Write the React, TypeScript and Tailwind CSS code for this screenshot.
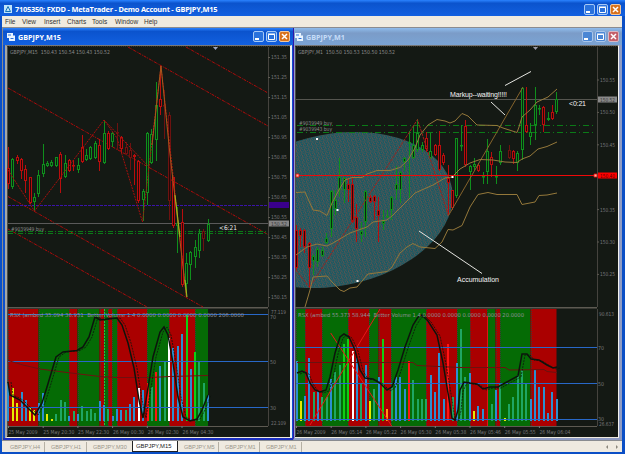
import React from 'react';
import clsx from 'clsx';

// x, high, body top, body bottom, low, colour (g = up, r = down, d = dim)
type Candle = [number, number, number, number, number, string];
// x, top, colour
type Bar = [number, number, string];
// start x, end x, colour
type Band = [number, number, string];

const CANDLE_COLORS: Record<string, string> = { g: '#0f8f1c', r: '#b90d0d', d: '#6d1210' };

const BAR_COLORS: Record<string, string> = {
  c: '#2b8fd0',
  g: '#1fa663',
  l: '#0fcf12',
  y: '#e6ea00',
  w: '#ffffff',
  r: '#ff1414',
  o: '#ff9a10',
};

const M15_CANDLES: Candle[] = [
  [8.5, 147, 168, 184, 189, 'r'], [12.5, 158, 159, 187, 189, 'g'], [17.5, 155, 157, 161, 164, 'r'],
  [21.5, 158, 159, 171, 179, 'r'], [25.5, 165, 169, 181, 193, 'r'], [30.5, 177, 177, 203, 204, 'r'],
  [34.5, 193, 197, 202, 211, 'g'], [38.5, 170, 175, 194, 197, 'g'], [43.5, 144, 164, 174, 177, 'g'],
  [47.5, 161, 163, 166, 167, 'g'], [51.5, 160, 162, 166, 167, 'g'], [56.5, 157, 157, 166, 167, 'g'],
  [60.5, 152, 154, 179, 193, 'r'], [65.5, 155, 163, 177, 178, 'g'], [69.5, 159, 160, 171, 172, 'r'],
  [73.5, 160, 165, 166, 171, 'r'], [78.5, 158, 165, 170, 173, 'g'], [82.5, 135, 147, 162, 163, 'r'],
  [86.5, 149, 155, 160, 161, 'g'], [90.5, 146, 147, 159, 160, 'g'], [95.5, 141, 143, 158, 159, 'g'],
  [99.5, 139, 145, 162, 171, 'r'], [104.5, 120, 133, 163, 164, 'g'], [108.5, 131, 133, 149, 150, 'r'],
  [112.5, 132, 133, 142, 147, 'g'], [117.5, 123, 132, 133, 150, 'd'], [121.5, 136, 137, 149, 153, 'r'],
  [126.5, 142, 147, 154, 155, 'd'], [130.5, 143, 150, 158, 170, 'd'], [134.5, 154, 155, 157, 185, 'r'],
  [138.5, 160, 161, 201, 203, 'r'], [143.5, 189, 191, 200, 221, 'g'], [147.5, 132, 133, 193, 205, 'g'],
  [151.5, 129, 134, 163, 164, 'g'], [156.5, 82, 105, 140, 161, 'g'], [160.5, 66, 99, 107, 115, 'r'],
  [164.5, 90, 105, 106, 139, 'd'], [169.5, 112, 115, 201, 220, 'd'], [173.5, 177, 177, 226, 228, 'r'],
  [177.5, 207, 223, 226, 253, 'g'], [182.5, 209, 222, 285, 287, 'r'], [186.5, 253, 263, 284, 296, 'g'],
  [190.5, 251, 252, 265, 280, 'g'], [195.5, 240, 247, 257, 268, 'g'], [199.5, 229, 233, 251, 258, 'g'],
  [203.5, 229, 231, 239, 251, 'd'], [208.5, 219, 224, 241, 242, 'g'],
];

const M1_CANDLES: Candle[] = [
  [296.5, 225, 230, 268, 270, 'r'], [300.5, 228, 230, 236, 247, 'r'], [304.5, 229, 230, 247, 253, 'r'],
  [309.5, 242, 243, 268, 288, 'r'], [313.5, 254, 256, 261, 275, 'g'], [317.5, 247, 249, 262, 267, 'g'],
  [322.5, 247, 250, 256, 257, 'g'], [326.5, 233, 238, 243, 244, 'g'], [331.5, 190, 191, 229, 237, 'g'],
  [335.5, 190, 200, 209, 215, 'g'], [339.5, 158, 177, 190, 197, 'g'], [344.5, 177, 178, 190, 203, 'g'],
  [348.5, 178, 184, 190, 202, 'r'], [352.5, 178, 184, 222, 223, 'r'], [356.5, 204, 217, 229, 242, 'r'],
  [361.5, 222, 231, 235, 242, 'g'], [365.5, 190, 191, 222, 237, 'g'], [370.5, 195, 197, 202, 203, 'r'],
  [374.5, 195, 196, 202, 220, 'r'], [378.5, 197, 210, 216, 242, 'r'], [383.5, 210, 221, 224, 230, 'g'],
  [387.5, 210, 216, 217, 218, 'g'], [391.5, 196, 197, 210, 220, 'g'], [396.5, 166, 184, 190, 200, 'g'],
  [400.5, 171, 172, 190, 203, 'g'], [404.5, 157, 158, 162, 171, 'g'], [409.5, 131, 142, 143, 198, 'g'],
  [413.5, 125, 145, 158, 159, 'g'], [417.5, 119, 133, 150, 152, 'g'], [422.5, 142, 145, 150, 152, 'g'],
  [426.5, 132, 138, 149, 152, 'r'], [430.5, 133, 151, 158, 159, 'g'], [435.5, 144, 145, 155, 156, 'r'],
  [439.5, 131, 145, 170, 171, 'r'], [443.5, 153, 155, 163, 165, 'r'], [448.5, 165, 178, 183, 215, 'r'],
  [452.5, 190, 190, 208, 210, 'r'], [456.5, 138, 138, 196, 198, 'g'], [461.5, 125, 145, 146, 151, 'g'],
  [465.5, 120, 126, 165, 167, 'r'], [470.5, 165, 166, 172, 190, 'g'], [474.5, 158, 164, 167, 171, 'g'],
  [478.5, 163, 165, 171, 172, 'r'], [483.5, 172, 176, 177, 184, 'g'], [487.5, 139, 151, 172, 184, 'g'],
  [491.5, 152, 157, 165, 177, 'r'], [496.5, 166, 176, 177, 184, 'g'], [500.5, 145, 151, 163, 165, 'g'],
  [509.5, 145, 150, 158, 159, 'd'], [513.5, 150, 151, 159, 164, 'r'], [517.5, 151, 153, 163, 171, 'g'],
  [522.5, 87, 88, 150, 160, 'g'], [526.5, 87, 125, 132, 133, 'r'], [530.5, 123, 132, 137, 145, 'g'],
  [535.5, 87, 105, 125, 140, 'g'], [539.5, 105, 108, 109, 115, 'g'], [543.5, 106, 107, 125, 132, 'r'],
  [548.5, 112, 118, 120, 121, 'g'], [552.5, 105, 112, 119, 120, 'r'], [556.5, 92, 99, 112, 114, 'g'],
];

const M15_BARS: Bar[] = [
  [8.3, 383, 'c'], [12.7, 388, 'y'], [17, 403, 'y'], [21.5, 392, 'c'], [26, 400, 'c'], [30, 407, 'y'],
  [34.3, 410, 'y'], [38.7, 403, 'c'], [43, 393, 'c'], [47.3, 414, 'y'], [51.7, 419, 'y'], [56, 414, 'g'],
  [60.7, 400, 'g'], [65, 402, 'g'], [69, 416, 'c'], [73.7, 411, 'g'], [78, 414, 'c'], [82, 406, 'g'],
  [86.7, 411, 'g'], [90.7, 409, 'g'], [95, 413, 'g'], [99.7, 401, 'c'], [104, 405, 'c'], [108, 409, 'g'],
  [112.7, 416, 'c'], [117, 409, 'c'], [121.3, 410, 'c'], [125.7, 410, 'g'], [130, 404, 'c'], [134.3, 397, 'c'],
  [138.7, 388, 'w'], [143, 390, 'c'], [147.7, 383, 'r'], [152, 387, 'g'], [156, 372, 'r'], [160.3, 366, 'c'],
  [165, 361, 'g'], [169, 338, 'w'], [173.3, 348, 'c'], [177.7, 346, 'c'], [182, 334, 'c'], [186.5, 314, 'l'],
  [190.7, 369, 'c'], [195, 352, 'l'], [199.3, 361, 'g'], [204, 383, 'g'], [208, 395, 'c'],
];

const M1_BARS: Bar[] = [
  [297, 361, 'c'], [300.7, 401, 'y'], [305, 396, 'c'], [309, 358, 'c'], [313.7, 392, 'g'], [318, 391, 'c'],
  [322.3, 397, 'g'], [326.7, 397, 'g'], [331, 379, 'c'], [335.3, 372, 'g'], [339.7, 365, 'g'], [344, 344, 'l'],
  [348, 339, 'l'], [352.7, 351, 'w'], [357, 358, 'c'], [361.3, 384, 'g'], [365.7, 365, 'c'], [370, 401, 'y'],
  [374.3, 389, 'g'], [378.7, 377, 'c'], [383, 339, 'l'], [387.3, 409, 'o'], [391.7, 387, 'g'], [396, 377, 'c'],
  [400.3, 377, 'c'], [405, 389, 'c'], [409, 361, 'r'], [413.3, 380, 'g'], [418, 399, 'g'], [422.3, 399, 'g'],
  [426.3, 399, 'g'], [430.7, 375, 'c'], [435, 392, 'c'], [439.3, 353, 'c'], [443.7, 399, 'c'], [448.3, 344, 'r'],
  [452.7, 397, 'g'], [456.7, 363, 'c'], [461, 329, 'g'], [465.3, 377, 'g'], [469.7, 373, 'c'], [474, 411, 'y'],
  [478.3, 406, 'c'], [482.7, 409, 'c'], [491.7, 404, 'g'], [496, 390, 'c'], [500.3, 384, 'g'], [504.7, 418, 'y'],
  [509, 404, 'g'], [513.3, 397, 'g'], [517.7, 375, 'g'], [522, 370, 'g'], [526.3, 384, 'g'], [530.7, 399, 'c'],
  [535, 370, 'c'], [539.3, 387, 'c'], [543.7, 387, 'c'], [548, 413, 'c'], [552.3, 392, 'c'], [556.5, 399, 'c'],
];

const M15_BANDS: Band[] = [
  [8, 38.5, 'r'], [38.5, 69, 'g'], [69, 77.5, 'r'], [77.5, 99.5, 'g'], [99.5, 104, 'r'], [104, 108, 'g'],
  [108, 112, 'r'], [112, 117, 'g'], [117, 147, 'r'], [147, 169, 'g'], [169, 195, 'r'], [195, 208, 'g'],
];

const M1_BANDS: Band[] = [
  [296, 305, 'g'], [305, 322, 'r'], [322, 348, 'g'], [348, 369, 'r'], [369, 378.5, 'g'], [378.5, 391, 'r'],
  [391, 426, 'g'], [426, 457, 'r'], [457, 470, 'g'], [470, 487, 'r'], [487, 495.5, 'g'], [495.5, 500, 'r'],
  [500, 530.5, 'g'], [530.5, 556.5, 'r'],
];

function Candles({ data }: { data: Candle[] }) {
  return (
    <g>
      {data.map(([x, high, top, bottom, low, c]) => (
        <g key={x} stroke={CANDLE_COLORS[c]} fill={c === 'g' ? '#0a2410' : '#2a0606'}>
          <path d={`M${x} ${high}V${low}`} />
          <rect x={x - 1} y={top + 0.5} width={2} height={Math.max(bottom - top - 1, 0.5)} />
        </g>
      ))}
    </g>
  );
}

function Bands({ data }: { data: Band[] }) {
  return (
    <g>
      {data.map(([from, to, c]) => (
        <rect key={from} x={from} y={309} width={to - from} height={117} fill={c === 'r' ? '#aa0000' : '#056b05'} />
      ))}
      {data.map(([from]) => (
        <path key={from} d={`M${Math.round(from) + 0.5} 309V426`} stroke="#3d3a33" strokeDasharray="1 1" />
      ))}
    </g>
  );
}

function Bars({ data }: { data: Bar[] }) {
  return (
    <g>
      {data.map(([x, top, c]) => (
        <rect key={x} x={Math.round(x - 1)} y={top} width={2} height={421 - top} fill={BAR_COLORS[c]} />
      ))}
    </g>
  );
}

interface LabelProps {
  x: number;
  y: number;
  w?: number;
  fill?: string;
  size?: number;
  children: React.ReactNode;
}

function Label({ x, y, w, fill = '#77777a', size = 5.5, children }: LabelProps) {
  return (
    <text
      x={x}
      y={y}
      fill={fill}
      fontSize={size}
      textLength={w}
      lengthAdjust="spacingAndGlyphs"
      fontFamily='"DejaVu Sans", sans-serif'
    >
      {children}
    </text>
  );
}

interface FrameProps {
  left: number;
  axis: number;
  right: number;
}

// Pane borders and the scale line
function Frame({ left, axis, right }: FrameProps) {
  return (
    <g stroke="#5d5a52" fill="none">
      <path d={`M${left + 0.5} 46V436`} stroke="#4b4a45" />
      <path d={`M${left} 46.5H${right}`} stroke="#3a3426" strokeDasharray="1 1" />
      <path d={`M${axis + 0.5} 47V307M${axis + 0.5} 309V426`} stroke="#45433e" />
      <path d={`M${left} 307.8H${axis}`} strokeWidth="1.6" />
      <path d={`M${left} 426.5H${axis}`} />
    </g>
  );
}

function ChartM15() {
  const prices = ['151.35', '151.25', '151.15', '151.05', '150.95', '150.85', '150.75', '150.65', '150.55', '150.45', '150.35', '150.25', '150.15'];
  const dates = ['25 May 2009', '25 May 20:30', '25 May 22:30', '26 May 00:30', '26 May 02:30', '26 May 04:30'];
  const rsx =
    'M8 382L10 395L20 400L30 410L35 415L42 403L47 387L56 357L63 352L77 350.500L83 347L89 337L95 317L100 320L107 319L117 318L122 325L128 343L134 368L139 400L143 418L147 394L153 357L160 332L164 327L168 335L173 363L178 397L183 417L190 421L197 419L202 410L208 395';
  return (
    <svg width={283} height={391} viewBox="7 46 283 391" className="block">
      <path d="M7 46h283v391H7z" fill="#141914" />
      <Frame left={7} axis={268} right={290} />

      {/* Regression channel */}
      <path
        d="M8 88L268 234.500M128 47L268 126M186 47L268 93M8 196.500L203 307M8 229L147 307"
        stroke="#b00a0a"
        strokeDasharray="3 1 1 1"
      />

      <path d="M8 205.500H268" stroke="#3a14a8" strokeDasharray="3 1" />
      <path d="M8 223.500H268" stroke="#5a5a5a" />
      <path d="M8 231.500H268M8 233.500H268" stroke="#0b7a17" strokeDasharray="5 2 1 2" />

      <Candles data={M15_CANDLES} />

      <path d="M8 170L34.500 211L104 120L117 138L142.500 222L161 66L186.500 297" fill="none" stroke="#a80f0c" strokeDasharray="2 1" />
      <path d="M104 120L150 168" stroke="#a80f0c" strokeDasharray="2 1" />
      <path d="M152 145L161 66L169.500 150L186.500 297" fill="none" stroke="#a8581c" />
      <path d="M175 195L180 237M185 280L187 297" fill="none" stroke="#9bbf1e" />
      <path d="M213 47h5l-2.500 3z" fill="#9aa4c0" />

      <Label x={10} y={53.500} w={100} fill="#8b8b8b">GBPJPY,M15&nbsp; 150.43 150.54 150.43 150.52</Label>
      <Label x={11} y={230.500} w={33} fill="#8b8b8b">#9039949 buy</Label>
      <Label x={219} y={230} w={18} fill="#f0f0f0" size={6.5}>&lt;6:21</Label>

      {prices.map((p, i) => (
        <g key={p}>
          <path d={`M268 ${57.5 + i * 20}h2`} stroke="#5d5a52" />
          <Label x={271} y={59.3 + i * 20} w={16}>{p}</Label>
        </g>
      ))}
      <path d="M269 202h20v6h-20z" fill="#3a008c" />
      <path d="M269 220.500h20v6h-20z" fill="#858585" />
      <Label x={271} y={225.500} w={16} fill="#3b3b3b">150.52</Label>

      <Bands data={M15_BANDS} />
      <path d="M104.500 309V426" stroke="#29c044" strokeDasharray="2 1" />
      <Bars data={M15_BARS} />
      <path d="M8 314.500H268M8 361.500H268M8 407.500H268" stroke="#2868c8" />
      <path d="M8 360.500L23 365L40 369L67 372.500L100 376.500L117 377.500H150L170 376.500L208 375.500" fill="none" stroke="#701010" />
      <path d={rsx} fill="none" stroke="#0c140c" strokeWidth="1.5" />
      <path d={rsx} fill="none" stroke="#0c140c" strokeWidth="0.8" strokeDasharray="2 1" transform="translate(3 0)" />
      <Label x={10} y={316.500} w={234} fill="#8f9098">RSX (ambed 35.094 36.951&nbsp; Better Volume 1.4 0.0000 0.0000 0.0000 0.0000 206.0000</Label>
      <Label x={271} y={314} w={15}>77.119</Label>
      <Label x={270} y={318.500} w={6}>70</Label>
      <Label x={270} y={363.500} w={6}>50</Label>
      <Label x={270} y={410} w={6}>30</Label>
      <Label x={271} y={425} w={15}>22.109</Label>
      {dates.map((d, i) => (
        <g key={d}>
          <path d={`M${8.5 + i * 34.7} 426v2`} stroke="#77777a" />
          <Label x={8.5 + i * 34.8} y={433.5} w={i ? 31 : 29}>{d}</Label>
        </g>
      ))}
    </svg>
  );
}

function ChartM1() {
  const prices = [
    { value: '150.55', y: 80 },
    { value: '150.50', y: 112.4 },
    { value: '150.45', y: 144.8 },
    { value: '150.35', y: 209.6 },
    { value: '150.30', y: 242 },
    { value: '150.25', y: 274.4 },
  ];
  const dates = ['26 May 2009', '26 May 05:14', '26 May 05:22', '26 May 05:30', '26 May 05:38', '26 May 05:46', '26 May 05:55', '26 May 06:04'];
  const rsx =
    'M297 373L302 371L306 373L310 383L315 390L320 392L326 390L330 377L335 353L340 337L344 334L349 337L355 350L360 370L365 378L373 379L380 383L387 390L392 387L398 370L405 347L413 325L418 317L422 315L428 321L437 335L443 363L448 393L452 418L455 420L458 410L460 390L464 382L470 383L477 384L483 389L490 387L498 387L505 383L518 376L522 354L527 354L531 359L539 360L547 365L553 368L557 367';
  return (
    <svg width={323} height={391} viewBox="295 46 323 391" className="block">
      <defs>
        <pattern id="hatch" width="4" height="4" patternUnits="userSpaceOnUse">
          <path d="M0 0h4v4H0z" fill="#185a64" />
          <path d="M0 0h1v1H0zM0 1h1v1H0zM1 2h1v1H1zM1 3h1v1H1zM2 0h1v1H2zM3 2h1v1H3z" fill="#5c5450" />
        </pattern>
        <clipPath id="plot">
          <path d="M296 47h301v260H296z" />
        </clipPath>
      </defs>
      <path d="M295 46h323v391H295z" fill="#141914" />
      <Frame left={295} axis={597} right={618} />

      <path d="M296 99.500H597" stroke="#55554f" />
      <g clipPath="url(#plot)">
        <ellipse cx="334" cy="210" rx="120" ry="76" transform="rotate(-11 334 210)" fill="url(#hatch)" />
      </g>
      <path d="M297 125.500H594M297 132.500H594" stroke="#0b7a17" strokeDasharray="6 3 1 3" />

      <Candles data={M1_CANDLES} />

      <path d="M296 270L309.500 287.500L417.500 119.500L448.500 215.500" fill="none" stroke="#a3201a" strokeDasharray="3 1" />
      <path d="M448.500 215.500L523 87" stroke="#86642c" />
      {/* Bollinger bands */}
      <g fill="none" stroke="#94783a">
        <path d="M296 192.500L305 192L313 210L320 211L327 215.500L332 203L340 188L345 180L352 177.500H362L367 174L377 170.500H390L400 167.500L408 160L415 148L420 135L428 125L437 119.500L445 121L450 123L455 121L462 113.500L468 116L477 125L497 125.500L503 128L517 132.500L519 127L522 117L530 110L537 102L548 97L557 89" />
        <path d="M296 255L307 247L317 244L327 246L333 243L350 233L367 227L373 222L387 220L393 215L403 205L415 193L433 185L445 178L452 177L460 169L470 163L480 159.500L493 160L505 162L517 162.500L522 159L530 156L538 149L547 146.500L557 142" />
        <path d="M305 307L310 290L313 277L327 276L332 282L340 290L344 291.500L350 288L357 287L368 274L387 271.500L392 267L400 253L407 247L413 243.500L420 247L435 248.500L442 242L448 229.500L453 230L462 225.500L470 207L478 194.500L488 192.500L497 194.500H517L522 204.500L535 202L539 195.500L547 195L557 193" />
      </g>

      <path d="M296 175.500H596" stroke="#f00808" />
      <path d="M296 174h3v3h-3zM594 174h3v3h-3z" fill="#ffb0a0" stroke="#f00808" strokeWidth="0.8" />
      <path d="M505 85.500L531 71.500M491 102L505 115M419 231L482 273.500" stroke="#e4e4e0" />
      <path d="M316 138h2v2h-2zM336.500 209h2v2h-2zM356.500 280h2v2h-2zM451.500 176h2v2h-2z" fill="#fff" />
      <path d="M533 47h5l-2.500 3z" fill="#9a9aa8" />

      <Label x={298} y={53.500} w={97} fill="#8b8b8b">GBPJPY,M1&nbsp; 150.50 150.53 150.50 150.52</Label>
      <Label x={299} y={124.500} w={33} fill="#8b8b8b">#9039949 buy</Label>
      <Label x={299} y={131} w={33} fill="#8b8b8b">#9039943 buy</Label>
      <g fill="#f4f4f4" fontSize="7" fontFamily='"Liberation Sans", Arial, sans-serif'>
        <text x="450" y="97" textLength="57">Markup--waiting!!!!!</text>
        <text x="569" y="106" textLength="17">&lt;0:21</text>
        <text x="457" y="282" textLength="42">Accumulation</text>
      </g>

      {prices.map((p) => (
        <g key={p.value}>
          <path d={`M597 ${p.y}h2`} stroke="#5d5a52" />
          <Label x={600} y={p.y + 2} w={15}>{p.value}</Label>
        </g>
      ))}
      <path d="M598 96.500h19v6h-19z" fill="#8a8a8a" />
      <Label x={600} y={101.500} w={15} fill="#3b3b3b">150.52</Label>
      <path d="M598 172.500h19v6h-19z" fill="#ff0000" />
      <Label x={600} y={177.500} w={15} fill="#5c0000">150.40</Label>

      <Bands data={M1_BANDS} />
      <Bars data={M1_BARS} />
      <path d="M487.500 316V426" stroke="#e01414" />
      <path d="M296 347.500H597M296 383.500H597M296 419.500H597" stroke="#2868c8" />
      <path d="M297 362.500H413L417 365.500L460 367.500H505L509 370L544 369.500L547 371.500L557 372.500" fill="none" stroke="#6a1210" />
      <path d="M330.700 333L391.700 426M310 425L380 309" stroke="#e81818" />
      <path d={rsx} fill="none" stroke="#0c140c" strokeWidth="1.5" />
      <path d={rsx} fill="none" stroke="#0c140c" strokeWidth="0.8" strokeDasharray="2 1" transform="translate(3 1)" />
      <Label x={298} y={316.500} w={226} fill="#8f9098">RSX (ambed 55.373 58.944&nbsp; Better Volume 1.4 0.0000 0.0000 0.0000 0.0000 20.0000</Label>
      <Label x={599} y={315.500} w={15}>90.613</Label>
      <Label x={598} y={349.500} w={6}>70</Label>
      <Label x={598} y={385.500} w={6}>50</Label>
      <Label x={598} y={420.500} w={6}>30</Label>
      <Label x={599} y={425.500} w={15}>26.637</Label>
      {dates.map((d, i) => (
        <g key={d}>
          <path d={`M${296.5 + i * 34.7} 426v2`} stroke="#77777a" />
          <Label x={296.5 + i * 34.7} y={433.5} w={i ? 31 : 29}>{d}</Label>
        </g>
      ))}
    </svg>
  );
}

function WindowButtons({ inactive = false }: { inactive?: boolean }) {
  const box = 'block size-[11px] rounded-[2px] border';
  const blue = inactive ? 'bg-[#4a86d4] border-[#a9c6ea]' : 'bg-[#2a72dc] border-[#a5c8f5]';
  return (
    <div className="flex gap-[2px]">
      <svg viewBox="0 0 9 9" className={clsx(box, blue)}>
        <path d="M1 6h4v2H1z" fill="#fff" />
      </svg>
      <svg viewBox="0 0 9 9" className={clsx(box, blue)}>
        <path d="M1.500 2.500h6v5h-6zM1 2h7" fill="none" stroke="#fff" />
      </svg>
      <svg
        viewBox="0 0 9 9"
        className={clsx(box, inactive ? 'bg-[#c4606a] border-[#d8b8c4]' : 'bg-[#d8721c] border-[#f0c8a0]')}
      >
        <path d="M2 2l5 5M7 2l-5 5" stroke="#fff" strokeWidth="1.5" />
      </svg>
    </div>
  );
}

function ChartIcon() {
  return (
    <svg viewBox="0 0 8 8" className="size-2 shrink-0">
      <path d="M0 0h6v2.500h2V8H2V5H0z" fill="#e8f4ff" />
      <path d="M1 2h3M3.500 5.500h3" stroke="#2a72dc" />
    </svg>
  );
}

const MENU = [
  { label: 'File', width: 'w-[17px]' },
  { label: 'View', width: 'w-[22px]' },
  { label: 'Insert', width: 'w-[23px]' },
  { label: 'Charts', width: 'w-[25px]' },
  { label: 'Tools', width: 'w-[23px]' },
  { label: 'Window', width: 'w-[29px]' },
  { label: 'Help', width: 'w-[20px]' },
];

export default function App() {
  return (
    <div className="flex h-[454px] w-[625px] flex-col overflow-hidden bg-[#0b4fc6] font-['Liberation_Sans',Arial,sans-serif]">
      {/* Title bar */}
      <header className="flex h-4 shrink-0 items-center bg-linear-to-b from-[#2b83ff] via-[#0b53cd] via-20% to-[#1260e0] pr-1 pl-1 pt-[2px]">
        <svg viewBox="0 0 8 8" className="size-2 shrink-0">
          <path d="M0 0h8v8H0z" fill="#bfe4fa" />
          <path d="M4 1.500L1.500 6.500h5z" fill="none" stroke="#1673b8" />
        </svg>
        <h1 className="ml-[3px] flex-1 whitespace-nowrap font-['Open_Sans',sans-serif] text-[7.4px] leading-[12px] font-bold tracking-[-0.21px] text-white">
          7105350: FXDD - MetaTrader - Demo Account - GBPJPY,M15
        </h1>
        <WindowButtons />
      </header>

      {/* Menu bar */}
      <nav className="ml-[2px] mr-[3px] flex h-[11px] shrink-0 items-center bg-[#f0ebdf] pl-[3px] text-[6.5px] leading-[11px] text-[#333]">
        {MENU.map((m) => (
          <span key={m.label} className={m.width}>{m.label}</span>
        ))}
      </nav>

      {/* Chart windows */}
      <main className="ml-[2px] mr-[3px] flex h-[413px] shrink-0 border-t border-l border-[#8a8c90] bg-[#8a8c90]">
        <section className="flex w-[290px] shrink-0 flex-col border-b-2 border-[#1b2fc0] bg-[#0d50cc]">
          <div className="flex h-[17px] shrink-0 items-center bg-linear-to-b from-[#2b83ff] via-[#0b53cd] via-20% to-[#1260e0] pl-1 pr-[3px]">
            <ChartIcon />
            <h2 className="ml-[3px] flex-1 font-['Open_Sans',sans-serif] text-[7.2px] leading-[12px] font-bold text-white">GBPJPY,M15</h2>
            <WindowButtons />
          </div>
          <div className="ml-[2px] mr-[1px] w-[287px] border-t border-r-2 border-b border-l-2 border-t-[#777] border-r-[#eef2fa] border-b-[#f0ece0] border-l-[#a5a6a4] bg-[#141914]">
            <ChartM15 />
          </div>
        </section>

        <section className="flex flex-1 flex-col border-b-2 border-l border-[#8f9cc4] border-l-[#3216a8] bg-[#8f9cc4]">
          <div className="flex h-[17px] shrink-0 items-center bg-linear-to-b from-[#8fbcec] via-[#7b9cc8] via-30% to-[#7aa3d4] pl-px pr-[3px]">
            <ChartIcon />
            <h2 className="ml-[3px] flex-1 font-['Open_Sans',sans-serif] text-[7.2px] leading-[12px] font-bold text-[#c6dcf8]">GBPJPY,M1</h2>
            <WindowButtons inactive />
          </div>
          <div className="ml-px w-[324px] border-t border-r border-b border-t-[#777] border-r-[#f4f2ee] border-b-[#f0ece0] bg-[#141914]">
            <ChartM1 />
          </div>
        </section>
      </main>

      {/* Chart tabs */}
      <footer className="ml-[2px] mr-[3px] flex h-3 shrink-0 items-center border-t border-[#8a8c90] bg-[#efeae0] pr-[3px] text-[5.6px] leading-[10px] text-[#9a968c]">
        <span className="w-[43px] border-r border-[#b5b0a4] pl-2">GBPJPY,H4</span>
        <span className="w-[42px] border-r border-[#b5b0a4] pl-[6px]">GBPJPY,H1</span>
        <span className="w-[45px] pl-[6px]">GBPJPY,M30</span>
        <span className="h-[11px] w-[46px] border-x border-b border-[#222] bg-white pl-[3px] text-[5.9px] text-[#222]">GBPJPY,M15</span>
        <span className="w-[41px] border-r border-[#b5b0a4] pl-[6px]">GBPJPY,M5</span>
        <span className="w-[41px] border-r border-[#b5b0a4] pl-[6px]">GBPJPY,M1</span>
        <span className="w-[42px] border-r border-[#b5b0a4] pl-[6px]">GBPJPY,M1</span>
        <svg viewBox="0 0 14 6" className="ml-auto h-[6px] w-[14px]">
          <path d="M3 1v4L1 3zM11 1v4l2-2z" fill="#8a867c" />
        </svg>
      </footer>
    </div>
  );
}
